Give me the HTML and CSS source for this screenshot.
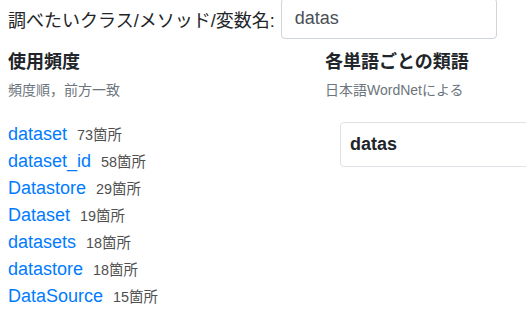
FILE: index.html
```html
<!DOCTYPE html>
<html lang="ja">
<head>
<meta charset="utf-8">
<link rel="stylesheet" href="styles.css">
</head>
<body>
<div class="search">
  <label class="search-label">調べたいクラス/メソッド/変数名:</label>
  <input class="search-input" type="text" value="datas">
</div>
<div class="columns">
  <section class="col-left">
    <h2 class="heading">使用頻度</h2>
    <p class="sub">頻度順，前方一致</p>
    <ul class="results">
      <li><a href="#">dataset</a><span class="count">73箇所</span></li>
      <li><a href="#">dataset_id</a><span class="count">58箇所</span></li>
      <li><a href="#">Datastore</a><span class="count">29箇所</span></li>
      <li><a href="#">Dataset</a><span class="count">19箇所</span></li>
      <li><a href="#">datasets</a><span class="count">18箇所</span></li>
      <li><a href="#">datastore</a><span class="count">18箇所</span></li>
      <li><a href="#">DataSource</a><span class="count">15箇所</span></li>
    </ul>
  </section>
  <section class="col-right">
    <h2 class="heading">各単語ごとの類語</h2>
    <p class="sub">日本語WordNetによる</p>
    <div class="card">datas</div>
  </section>
</div>
</body>
</html>
```
FILE: styles.css
```css
html, body {
  margin: 0;
  padding: 0;
  background: #fff;
  overflow: hidden;
}
body {
  padding: 0 8px;
  font-family: "Liberation Sans", "Noto Sans CJK JP", sans-serif;
  color: #212529;
  font-size: 18px;
}
.search {
  display: flex;
  align-items: center;
  gap: 6px;
  margin-top: -2px;
}
.search-label {
  font-size: 18px;
  color: #212529;
}
.search-input {
  width: 216px;
  height: 41px;
  box-sizing: border-box;
  border: 1px solid #ced4da;
  border-radius: 4px;
  padding: 0 13px;
  font-family: "Liberation Sans", sans-serif;
  font-size: 18px;
  color: #495057;
  outline: none;
}
.columns {
  display: grid;
  grid-template-columns: 317px 1fr;
  margin-top: 11px;
}
.heading {
  margin: 0;
  font-size: 18px;
  font-weight: bold;
  line-height: 24px;
  color: #212529;
}
.sub {
  margin: 6px 0 0;
  font-size: 14px;
  line-height: 20px;
  color: #6c757d;
}
.results {
  list-style: none;
  margin: 21px 0 0;
  padding: 0;
}
.results li {
  line-height: 27px;
  height: 27px;
}
.results a {
  color: #007bff;
  text-decoration: none;
  font-size: 18px;
}
.count {
  margin-left: 10px;
  font-size: 14.4px;
  color: #4f4f4f;
}
.card {
  margin: 22px 0 0 15px;
  width: 220px;
  height: 45px;
  box-sizing: border-box;
  border: 1px solid #dee2e6;
  border-radius: 4px;
  padding: 0 9px;
  display: flex;
  align-items: center;
  font-weight: bold;
  font-size: 18px;
}
```
